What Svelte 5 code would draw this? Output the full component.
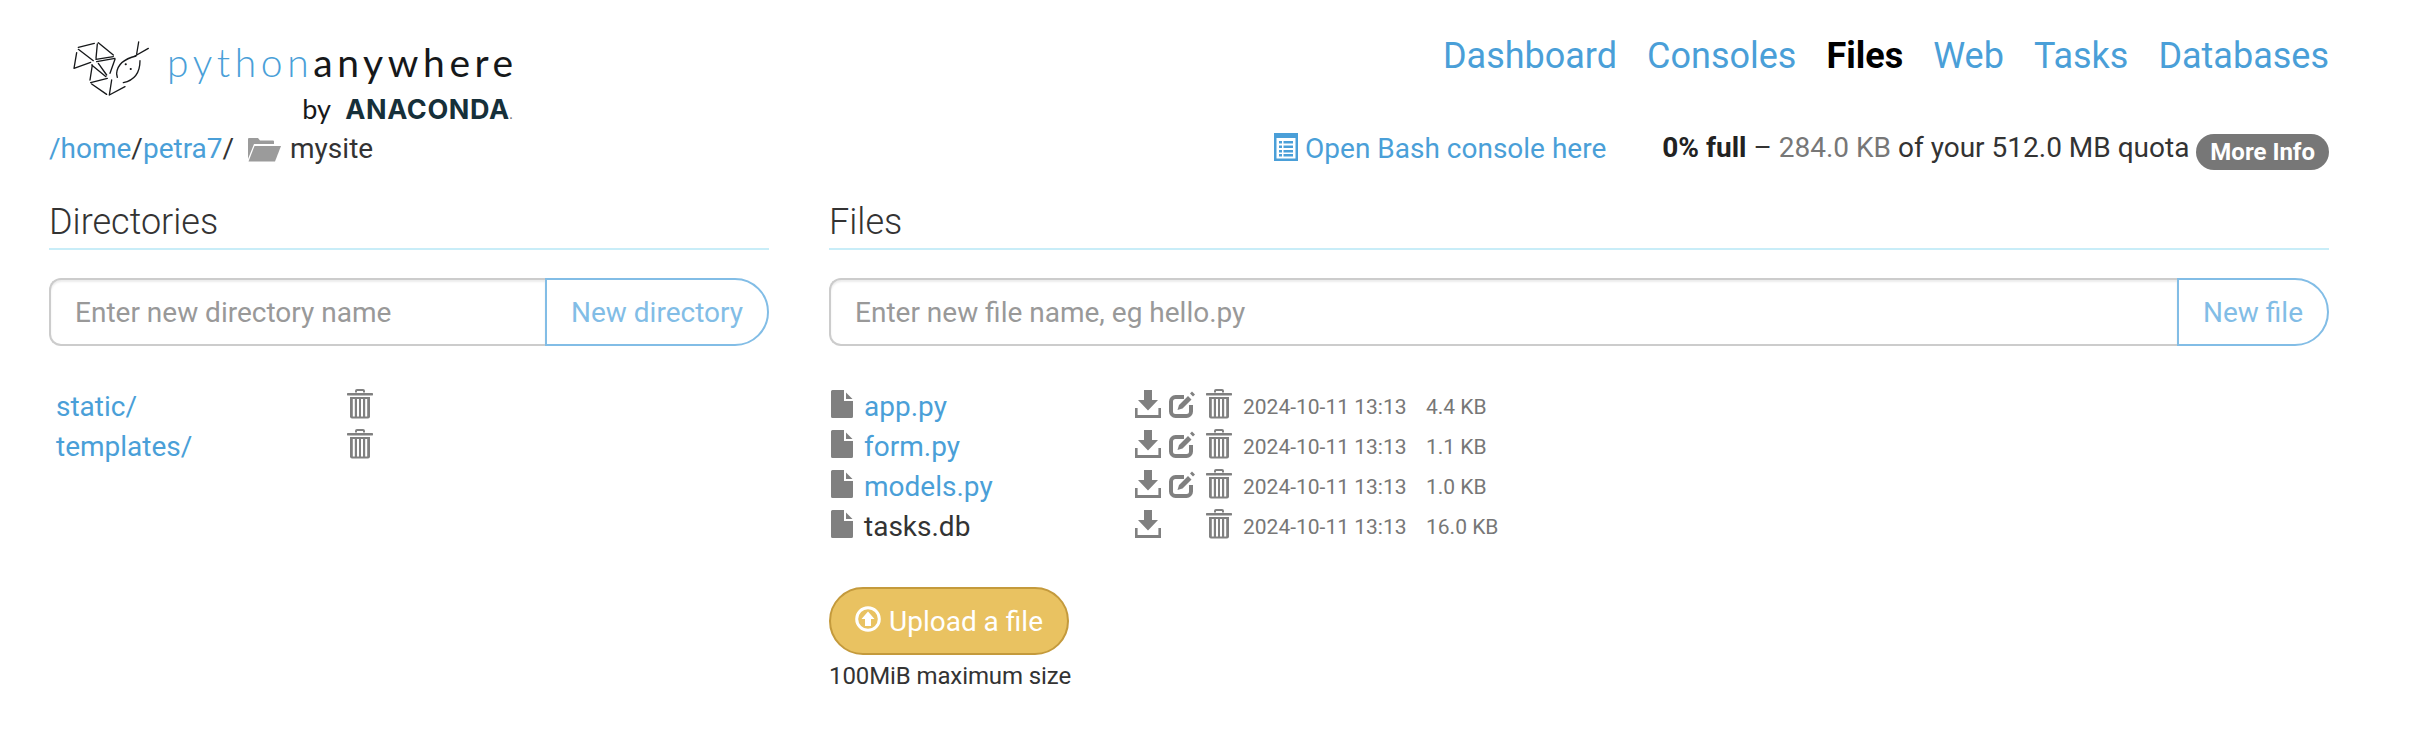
<script>
	const nav = ['Dashboard', 'Consoles', 'Files', 'Web', 'Tasks', 'Databases'];
	const dirs = ['static/', 'templates/'];
	const files = [
		{ name: 'app.py', link: true, size: '4.4 KB' },
		{ name: 'form.py', link: true, size: '1.1 KB' },
		{ name: 'models.py', link: true, size: '1.0 KB' },
		{ name: 'tasks.db', link: false, size: '16.0 KB' }
	];
	const stamp = '2024-10-11 13:13';
</script>

{#snippet trash()}
	<svg class="icon trash" viewBox="0 0 26 30" aria-hidden="true">
		<path d="M9 3.5V2a1 1 0 0 1 1-1h6a1 1 0 0 1 1 1v1.5" fill="none" stroke="#808080" stroke-width="2" />
		<rect x="0" y="4" width="26" height="2.4" rx="0.6" fill="#808080" />
		<path d="M3 8h20v19.5a2 2 0 0 1-2 2H5a2 2 0 0 1-2-2z" fill="#808080" />
		<path d="M6.800 10v17.500M11 10v17.500M15 10v17.500M19.200 10v17.500" stroke="#fff" stroke-width="2" />
	</svg>
{/snippet}

<div class="page">
	<header class="top">
		<div class="logo">
			<div class="logo-main">
				<svg class="mark" viewBox="0 0 110 75" aria-hidden="true">
					<g transform="scale(0.3333)" fill="none" stroke="#16181a" stroke-width="4" stroke-linecap="round">
						<path d="M55 52 103 40M55 58 100 92M50 68 42 115M42 115 92 97" />
						<path d="M115 38 160 75M112 42 108 85M108 88 160 80" />
						<path d="M110 95 165 85M115 100 140 135M165 88 150 130" />
						<path d="M97 105 90 150M95 105 138 140" />
						<path d="M92 158 142 145M95 162 140 193M155 150 148 195M148 195 195 170" />
						<path d="M170 130C172 104 195 86 228 78M240 92C240 125 225 150 190 158M170 132 172 142" />
						<path d="M236 36 230 72M225 78 265 55" />
						<path d="M197 103h.5M212 117h.5" stroke-width="6" />
					</g>
				</svg>
				<span class="wordmark"><span class="py">python</span>anywhere</span>
			</div>
			<div class="by">by <b>ANACONDA</b><i>.</i></div>
		</div>
		<nav>
			{#each nav as item}
				<a href="#top" class:active={item === 'Files'}>{item}</a>
			{/each}
		</nav>
	</header>

	<div class="path-row">
		<div class="crumbs">
			<a href="#top">/home</a>/<a href="#top">petra7</a>/
			<svg class="folder" viewBox="0 0 34 26" aria-hidden="true">
				<path d="M1 23V3a1 1 0 0 1 1-1h9l2 2.5h13a1 1 0 0 1 1 1V8H7z" fill="#9b9b9b" />
				<path d="M7.5 10H34l-6 15.5H1.5z" fill="#9b9b9b" />
			</svg>
			<span class="cwd">mysite</span>
		</div>
		<div class="status">
			<a class="bash" href="#top">
				<svg class="listalt" viewBox="0 0 24 28" aria-hidden="true">
					<path fill-rule="evenodd" fill="#4a9fd8" d="M0 0h24v28H0zM2.5 5v20.5h19V5z" />
					<path fill="#4a9fd8" d="M5 8h3v2.5H5zM9.5 8H19v2.5H9.5zM5 12.5h3V15H5zM9.5 12.5H19V15H9.5zM5 17h3v2.5H5zM9.5 17H19v2.5H9.5zM5 21h3v2.5H5zM9.5 21H19v2.5H9.5z" />
				</svg>
				Open Bash console here
			</a>
			<div class="quota">
				<b>0% full</b> – <span class="muted">284.0 KB</span> of your 512.0 MB quota
				<span class="pill">More Info</span>
			</div>
		</div>
	</div>

	<main class="cols">
		<section class="dirs">
			<h2>Directories</h2>
			<form class="entry">
				<input placeholder="Enter new directory name" />
				<button type="button">New directory</button>
			</form>
			<ul class="dir-list">
				{#each dirs as dir}
					<li>
						<a href="#top">{dir}</a>
						{@render trash()}
					</li>
				{/each}
			</ul>
		</section>

		<section class="files">
			<h2>Files</h2>
			<form class="entry">
				<input placeholder="Enter new file name, eg hello.py" />
				<button type="button">New file</button>
			</form>
			<ul class="file-list">
				{#each files as file}
					<li>
						<svg class="icon doc" viewBox="0 0 22 28" aria-hidden="true">
							<path fill="#808080" d="M1.500 0H13v11h9V26.500a1.500 1.500 0 0 1-1.500 1.500h-19A1.500 1.500 0 0 1 0 26.500V1.500A1.500 1.500 0 0 1 1.500 0z" />
							<path fill="#808080" d="M15 2.500 21.500 9H15z" />
						</svg>
						{#if file.link}
							<a class="name" href="#top">{file.name}</a>
						{:else}
							<span class="name">{file.name}</span>
						{/if}
						<svg class="icon dl" viewBox="0 0 26 28" aria-hidden="true">
							<path fill="#808080" d="M9 0h8v10h6L13 20.500 3 10h6z" />
							<path fill="#808080" d="M0 18h2.600v7H23.400v-7H26v10H0z" />
						</svg>
						{#if file.link}
							<svg class="icon edit" viewBox="0 0 26 28" aria-hidden="true">
								<path fill="none" stroke="#808080" stroke-width="4" d="M15 7H6.500a4.500 4.500 0 0 0-4.500 4.500v10a4.500 4.500 0 0 0 4.500 4.500h11a4.500 4.500 0 0 0 4.500-4.500V15" />
								<path fill="#808080" d="M8.500 20l1.500-5L19 6l3.500 3.500-9 9zM23 1.500l3 3-2 2-3-3z" />
							</svg>
						{:else}
							<span class="edit-gap"></span>
						{/if}
						{@render trash()}
						<span class="stamp">{stamp}</span>
						<span class="stamp">{file.size}</span>
					</li>
				{/each}
			</ul>
			<button class="upload" type="button">
				<svg class="up" viewBox="0 0 26 26" aria-hidden="true">
					<circle cx="13" cy="13" r="11.300" fill="none" stroke="#fff" stroke-width="3" />
					<path fill="#fff" d="M13 5.500 19.500 13H16v7h-6v-7H6.500z" />
				</svg>
				Upload a file
			</button>
			<p class="limit">100MiB maximum size</p>
		</section>
	</main>
</div>

<style>
	:global(body) {
		margin: 0;
		background: #fff;
		font-family: Roboto, 'Liberation Sans', sans-serif;
		color: #333;
	}

	a {
		color: #4a9fd8;
		text-decoration: none;
	}

	.page {
		padding: 0 83px 0 49px;
		font-size: 28px;
		line-height: 40px;
	}

	.top {
		display: flex;
		justify-content: space-between;
		height: 129px;
	}

	.logo {
		width: 464px;
		padding-top: 30px;
		box-sizing: border-box;
	}

	.logo-main {
		display: flex;
		align-items: flex-start;
		margin-left: 11px;
	}

	.mark {
		width: 110px;
		height: 75px;
		flex: none;
	}

	.wordmark {
		margin: 9px 0 0 -3px;
		font-family: Lato, sans-serif;
		font-weight: 400;
		font-size: 39px;
		letter-spacing: 4.600px;
		line-height: 46px;
		color: #16181a;
		white-space: nowrap;
	}

	.py {
		color: #4a9fd8;
		font-weight: 300;
	}

	.by {
		margin: -13px 0 0 0;
		text-align: right;
		font-family: Lato, sans-serif;
		font-size: 27px;
		line-height: 34px;
		color: #16181a;
	}

	.by b {
		margin-left: 8px;
		font-family: Inter, sans-serif;
		font-weight: 700;
		font-size: 27px;
		color: #16303a;
		letter-spacing: 0.6px;
	}

	.by i {
		font-size: 14px;
		color: #777;
	}

	nav {
		display: flex;
		gap: 30px;
		padding-top: 31px;
		font-size: 36px;
		line-height: 50px;
	}

	nav a.active {
		color: #000;
		font-weight: 700;
	}

	.path-row {
		display: flex;
		justify-content: space-between;
		align-items: center;
		height: 40px;
	}

	.crumbs {
		display: flex;
		align-items: center;
		white-space: pre;
	}

	.folder {
		width: 34px;
		height: 26px;
		margin: 0 9px 0 6px;
	}

	.cwd {
		color: #333;
	}

	.status {
		display: flex;
		align-items: center;
		gap: 56px;
	}

	.bash {
		display: flex;
		align-items: center;
		gap: 7px;
	}

	.listalt {
		width: 24px;
		height: 28px;
		margin-top: -4px;
	}

	.quota b {
		color: #222;
	}

	.muted {
		color: #777;
	}

	.pill {
		display: inline-block;
		padding: 0 14px;
		background: #777;
		border-radius: 18px;
		color: #fff;
		font-size: 24px;
		font-weight: 700;
		line-height: 36px;
		vertical-align: -3px;
	}

	.cols {
		display: grid;
		grid-template-columns: 720px 1500px;
		justify-content: space-between;
		margin-top: 31px;
	}

	h2 {
		margin: 0;
		padding-bottom: 4px;
		border-bottom: 2px solid #c8edf8;
		font-size: 36px;
		font-weight: 300;
		line-height: 44px;
		color: #333;
	}

	.entry {
		display: flex;
		height: 68px;
		margin-top: 28px;
	}

	.entry input {
		flex: 1;
		min-width: 0;
		padding: 0 24px;
		border: 2px solid #ccc;
		border-right: 0;
		border-radius: 12px 0 0 12px;
		box-shadow: inset 0 2px 2px rgba(0, 0, 0, 0.08);
		font: 400 28px Roboto, sans-serif;
		outline: none;
	}

	.entry input::placeholder {
		color: #999;
		opacity: 1;
	}

	.entry button {
		padding: 0 24px;
		background: #fff;
		border: 2px solid #82bde6;
		border-radius: 0 34px 34px 0;
		color: #82bde6;
		font: 400 28px Roboto, sans-serif;
	}

	ul {
		margin: 0;
		padding: 0;
		list-style: none;
	}

	.dir-list {
		margin-top: 41px;
	}

	.dir-list li {
		display: flex;
		align-items: center;
		height: 40px;
		padding-left: 7px;
	}

	.dir-list a {
		width: 291px;
	}

	.icon {
		flex: none;
		height: 28px;
		margin-top: -7px;
	}

	.trash {
		width: 26px;
		height: 30px;
	}

	.file-list {
		margin-top: 41px;
	}

	.file-list li {
		display: flex;
		align-items: center;
		height: 40px;
	}

	.doc {
		width: 22px;
		margin: -7px 11px 0 2px;
	}

	.name {
		width: 271px;
	}

	.dl {
		width: 26px;
		margin-right: 8px;
	}

	.edit {
		width: 26px;
		margin-right: 11px;
	}

	.edit-gap {
		width: 37px;
	}

	.stamp {
		margin-left: 11px;
		font-size: 21px;
		color: #777;
		width: 172px;
	}

	.stamp + .stamp {
		width: auto;
	}

	.upload {
		display: flex;
		align-items: center;
		gap: 8px;
		height: 68px;
		margin-top: 40px;
		padding: 0 24px;
		background: #e9c261;
		border: 2px solid #c49a3c;
		border-radius: 34px;
		color: #fff;
		font: 400 28px Roboto, sans-serif;
	}

	.up {
		width: 26px;
		height: 26px;
		margin-top: -4px;
	}

	.limit {
		margin: 4px 0 0;
		font-size: 24px;
		letter-spacing: -0.1px;
		line-height: 34px;
		color: #333;
	}
</style>
